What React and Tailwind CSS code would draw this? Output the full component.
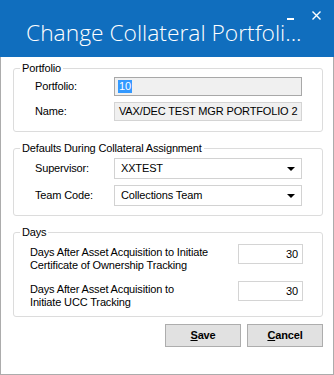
import React from "react";

const F = { fontFamily: '"Liberation Sans", Arial, sans-serif' };

function Arrow() {
  return (
    <svg width="8" height="4" viewBox="0 0 8 4" className="shrink-0">
      <path d="M0 0H8L4 4Z" fill="#000" />
    </svg>
  );
}

function Select({ value }) {
  return (
    <div className="flex h-[21px] w-[188px] items-center justify-between border border-[#d2d2d2] bg-white pl-[6px] pr-[6px] text-black">
      <span>{value}</span>
      <Arrow />
    </div>
  );
}

function Group({ title, className, children }) {
  return (
    <fieldset className={"rounded-[3px] border border-[#dcdcdc] px-0 " + className}>
      <legend className="ml-[6px] px-[2px]">{title}</legend>
      {children}
    </fieldset>
  );
}

export default function App() {
  return (
    <div className="w-[334px] h-[375px] flex flex-col bg-white text-[11px] tracking-[-0.15px] leading-[13px] text-black" style={F}>
      <div className="relative h-[57px] shrink-0 bg-[#106ebe]">
        <div
          className="pl-[26px] pt-[19px] text-[22.8px] leading-[28px] font-light tracking-normal text-white"
          style={{ fontFamily: '"Open Sans", sans-serif' }}
        >
          Change Collateral Portfoli...
        </div>
        <div className="absolute left-[287px] top-[18px] h-[2px] w-[7px] bg-white" />
        <svg className="absolute left-[312px] top-[11px]" width="9" height="9" viewBox="0 0 9 9">
          <path d="M0.5 0.5L8.5 8.5M8.5 0.5L0.5 8.5" stroke="#fff" strokeWidth="1.4" />
        </svg>
      </div>
      <div className="flex flex-1 flex-col border-x border-b border-[#acacac] pl-[12px] pr-[10px] pt-[5px]">
        <Group title="Portfolio" className="pb-[10px]">
          <div className="pl-[21px] pr-[19px]">
            <div className="mt-[2px] flex items-center">
              <span className="w-[79px]">Portfolio:</span>
              <div className="flex h-[19px] w-[188px] items-center border border-[#a8a8a8] bg-[#f0f0f0] pl-[3px]">
                <span className="bg-[#3399ff] px-[1px] text-white">10</span>
              </div>
            </div>
            <div className="mt-[6px] flex items-center">
              <span className="w-[79px]">Name:</span>
              <div className="flex h-[19px] w-[188px] items-center border border-[#d4d4d4] bg-[#f0f0f0] pl-[4px]">
                VAX/DEC TEST MGR PORTFOLIO 2
              </div>
            </div>
          </div>
        </Group>

        <Group title="Defaults During Collateral Assignment" className="mt-[10px] pb-[9px]">
          <div className="pl-[21px] pr-[19px]">
            <div className="mt-[3px] flex items-center">
              <span className="w-[79px]">Supervisor:</span>
              <Select value="XXTEST" />
            </div>
            <div className="mt-[6px] flex items-center">
              <span className="w-[79px]">Team Code:</span>
              <Select value="Collections Team" />
            </div>
          </div>
        </Group>

        <Group title="Days" className="mt-[10px] pb-[7px]">
          <div className="pl-[16px] pr-[19px]">
            <div className="mt-[5px] flex items-start justify-between">
              <div className="mt-[2px]">
                Days After Asset Acquisition to Initiate
                <br />
                Certificate of Ownership Tracking
              </div>
              <div className="flex h-[20px] w-[65px] items-center justify-end border border-[#d4d4d4] bg-white pr-[4px]">30</div>
            </div>
            <div className="mt-[9px] flex items-start justify-between">
              <div className="mt-[2px]">
                Days After Asset Acquisition to
                <br />
                Initiate UCC Tracking
              </div>
              <div className="flex h-[20px] w-[65px] items-center justify-end border border-[#d4d4d4] bg-white pr-[4px]">30</div>
            </div>
          </div>
        </Group>

        <div className="mt-[7px] flex justify-end gap-[6px]">
          <button className="h-[23px] w-[76px] border border-[#adadad] bg-[#e1e1e1] font-bold">
            <span className="underline">S</span>ave
          </button>
          <button className="h-[23px] w-[76px] border border-[#adadad] bg-[#e1e1e1] font-bold">
            <span className="underline">C</span>ancel
          </button>
        </div>
      </div>
    </div>
  );
}
